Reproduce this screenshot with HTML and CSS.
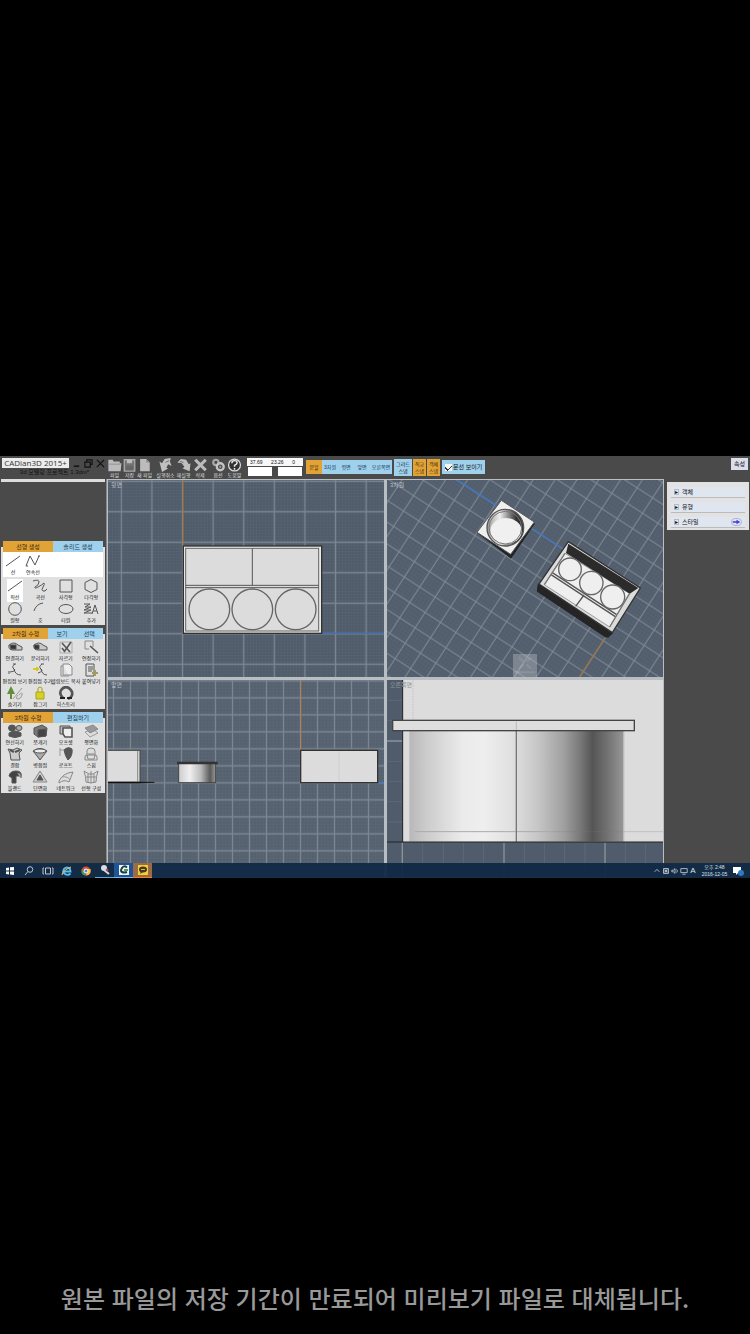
FILE: index.html
```html
<!DOCTYPE html>
<html lang="ko">
<head>
<meta charset="utf-8">
<meta name="viewport" content="width=device-width, initial-scale=1">
<title>CADian3D 2015+</title>
<link rel="stylesheet" href="styles.css">
</head>
<body>
<main class="app">
  <header class="topbar">
    <div class="brand">
      <div class="brand-row">
        <h1 class="brand-name">CADian3D 2015+</h1>
        <button class="win" aria-label="최소화"><svg viewBox="0 0 10 10"><path d="M2 8h6" stroke="#111" stroke-width="1.6"/></svg></button>
        <button class="win" aria-label="이전 크기"><svg viewBox="0 0 10 10"><path d="M3 3V1h6v5H7M1 3.500h6V9H1z" fill="none" stroke="#111" stroke-width="1.3"/></svg></button>
        <button class="win" aria-label="닫기"><svg viewBox="0 0 10 10"><path d="M1 1l8 8M9 1L1 9" stroke="#111" stroke-width="1.4"/></svg></button>
      </div>
      <p class="doc">3d 모델링 프로젝트 1.3dm*</p>
    </div>
    <nav class="tools">
      <button class="tool"><svg viewBox="0 0 16 16"><path d="M1 2h5l1 2h7v2h2l-1 9H1z" fill="#bcbcbc"/><path d="M2 7h13" stroke="#8c8c8c"/></svg><span>파일</span></button>
      <button class="tool"><svg viewBox="0 0 16 16"><path d="M2 2h12v13H2z" fill="#737373" stroke="#aaa" stroke-width="1.500"/><path d="M5 2h6v4H5z" fill="#bbb"/><path d="M4 9h8v5H4z" fill="#666"/></svg><span>저장</span></button>
      <button class="tool"><svg viewBox="0 0 16 16"><path d="M3 1h7l4 4v10H3z" fill="#bcbcbc"/><path d="M10 1v4h4" fill="#8c8c8c"/></svg><span>새 파일</span></button>
      <button class="tool wide"><svg viewBox="0 0 16 16"><path d="M1 4l3 2 3-5 7-1-1 4 2 5-4-2-2 4 2 1-7 4z" fill="#c0c0c0"/><path d="M8 5l4-2" stroke="#666"/></svg><span>실행취소</span></button>
      <button class="tool"><svg viewBox="0 0 16 16"><path d="M15 15l-8-3 2-2-3-4-5-1 4-4 6 1 3 5 2-1z" fill="#c0c0c0"/><path d="M4 4l4 1" stroke="#666"/></svg><span>재실행</span></button>
      <button class="tool gap"><svg viewBox="0 0 16 16"><path d="M2 2l12 12M14 2L2 14" stroke="#bcbcbc" stroke-width="3.600"/></svg><span>삭제</span></button>
      <button class="tool gap"><svg viewBox="0 0 16 16" fill="none"><circle cx="5" cy="5" r="3" stroke="#aaa" stroke-width="2.400"/><circle cx="10" cy="10" r="4" stroke="#c4c4c4" stroke-width="2.600"/><circle cx="10" cy="10" r="1.200" fill="#aaa"/></svg><span>옵션</span></button>
      <button class="tool"><svg viewBox="0 0 16 16" fill="none"><circle cx="8" cy="8" r="6.800" fill="#333" stroke="#ddd" stroke-width="1.400"/><path d="M5 6q0-3 3-3t3 2.500q0 1.500-3 3V10M8 11.500v2" stroke="#eee" stroke-width="1.700"/></svg><span>도움말</span></button>
    </nav>
    <div class="coords">
      <div class="readout"><span>37.69</span><span>23.26</span><span>0</span></div>
      <div class="entries"><input aria-label="X"><input aria-label="Y"></div>
    </div>
    <nav class="views">
      <button class="on">분할</button><button>3차원</button><button>윗면</button><button>앞면</button><button class="last">오른쪽면</button>
    </nav>
    <div class="snaps">
      <button>그리드<br>스냅</button><button class="on">직교<br>스냅</button><button class="on">객체<br>스냅</button>
    </div>
    <label class="check"><input type="checkbox" checked>문선 보이기</label>
    <button class="props">속성</button>
  </header>

  <div class="work">
    <aside class="left">
      <div class="strip"></div>
      <section class="panel">
        <div class="tabs"><button class="on">선형 생성</button><button>솔리드 생성</button></div>
        <div class="grid pale">
          <button><svg viewBox="0 0 16 14"><path d="M1 12L15 2"/></svg>선</button>
          <button><svg viewBox="0 0 16 14"><path d="M1 12L5 2l5 9 4-9M1 12h2M13 2h2"/></svg>연속선</button>
        </div>
        <div class="grid">
          <button class="sel"><svg viewBox="0 0 16 14"><path d="M1 12L15 2"/></svg>직선</button>
          <button><svg viewBox="0 0 16 14"><path d="M1 2q6-2 6 1T3 8q-1 2 3 0t6-4q1 1-1 4t0 4 4-2"/></svg>곡선</button>
          <button><svg viewBox="0 0 16 14"><path d="M2 1h12v12H2z"/></svg>사각형</button>
          <button><svg viewBox="0 0 16 14"><path d="M8 0.500l6 3v7l-6 3-6-3v-7z"/></svg>다각형</button>
          <button><svg viewBox="0 0 16 14"><circle cx="8" cy="7" r="6.300"/></svg>원형</button>
          <button><svg viewBox="0 0 16 14"><path d="M2 9Q4 2 11 1"/></svg>호</button>
          <button><svg viewBox="0 0 16 14"><ellipse cx="8" cy="7" rx="7" ry="4.500"/></svg>타원</button>
          <button><svg viewBox="0 0 16 14"><path d="M1 2h6L2 5h6L1 8h7L1 11h8M9 12l3-9 3 9M10 9h4"/></svg>추가</button>
        </div>
      </section>
      <section class="panel">
        <div class="tabs"><button class="on big">2차원 수정</button><button class="mid">보기</button><button class="mid">선택</button></div>
        <div class="grid">
          <button><svg viewBox="0 0 16 14"><path d="M2 5q5-4 9 0l4 2v3H6Q1 10 2 5z" fill="#c8c8c8"/><path d="M3 5h6v4H4z" fill="#333"/></svg>연결하기</button>
          <button><svg viewBox="0 0 16 14"><path d="M2 5q5-4 9 0l4 2v3H6Q1 10 2 5z" fill="#c8c8c8"/><path d="M2 5h5v4H3z" fill="#333"/></svg>분리하기</button>
          <button><svg viewBox="0 0 16 14"><path d="M2 13V2h12v11z" stroke="#aaa"/><path d="M4 3l8 9M13 2L6 12M4 8l3 4" stroke-width="1.600"/></svg>자르기</button>
          <button><svg viewBox="0 0 16 14"><path d="M2 9V1h8v6M2 9h4" stroke="#888"/><path d="M7 6l8 7" stroke-width="1.600"/></svg>연장하기</button>
          <button><svg viewBox="0 0 16 14"><path d="M8 1q-4 3-1 5t-4 3M7 6q1 6 7 6M6 1h3M2 8v3"/></svg>편집점 보기</button>
          <button><svg viewBox="0 0 16 14"><path d="M10 1q-4 3-1 5t-3 4M9 6q1 6 6 6M9 1h3"/><path d="M1 6h6M5 4v4" stroke="#d6ca1e" stroke-width="2"/></svg>편집점 추가</button>
          <button><svg viewBox="0 0 16 14"><path d="M5 1h6l3 3v8H5zM5 3H3v10h8" fill="#eee" stroke="#888"/></svg>클립보드 복사</button>
          <button><svg viewBox="0 0 16 14"><path d="M3 1h8v12H3zM5 4h5M5 6h5M5 8h4"/><path d="M12 7v6M9 10h6" stroke="#a39a60" stroke-width="2"/></svg>붙여넣기</button>
          <button><svg viewBox="0 0 16 14"><path d="M4 0L0 8h3v5h2V8h3z" fill="#628e39" stroke="none"/><path d="M6 13L15 2M11 9q-3 4 0 4t4-4-3 0" stroke="#999"/></svg>숨기기</button>
          <button><svg viewBox="0 0 16 14"><path d="M6 6V2q2-2 4 0v4" stroke="#aaa21b"/><path d="M4 6h8v7H4z" fill="#d6d320" stroke="#aaa21b"/></svg>잠그기</button>
          <button><svg viewBox="0 0 16 14"><path d="M5 12Q0 7 4 3t8 0 1 8l-3 2" stroke-width="2.600"/><path d="M2 12h5M9 12h5" stroke="#222" stroke-width="2"/></svg>히스토리</button>
        </div>
      </section>
      <section class="panel">
        <div class="tabs"><button class="on">3차원 수정</button><button>편집하기</button></div>
        <div class="grid">
          <button><svg viewBox="0 0 16 14"><g fill="#555"><ellipse cx="5" cy="4" rx="3.500" ry="3"/><ellipse cx="12" cy="4" rx="3" ry="2.500" fill="#aaa"/><path d="M2 9q6-4 12 0v3q-6 3-12 0z"/></g></svg>연산하기</button>
          <button><svg viewBox="0 0 16 14"><path d="M2 4l8-3 5 3-1 8-8 1-4-3z" fill="#777"/><path d="M6 6l8-1v7l-8 1z" fill="#444"/></svg>쪼개기</button>
          <button><svg viewBox="0 0 16 14"><path d="M2 2h10v8H2z" fill="#bbb"/><path d="M5 4h9v9H7l-2-3z" fill="#eee" stroke-width="1.600"/></svg>오프셋</button>
          <button><svg viewBox="0 0 16 14"><path d="M2 8l8-3 5 4-8 4z" fill="#ddd" stroke="#999"/><path d="M2 4l8-3 5 4-8 4z" fill="#999" stroke="#888"/></svg>평면화</button>
          <button><svg viewBox="0 0 16 14"><path d="M1 2l5 1 4-2 5 2-3 3 1 7H4L3 6z" fill="#ccc"/><path d="M3 3l4 2M8 5l5-2" stroke-width="2"/></svg>결합</button>
          <button><svg viewBox="0 0 16 14"><path d="M1 4q7-5 14 0l-4 5-3 4-3-4z" fill="#aaa"/><ellipse cx="8" cy="4" rx="6" ry="2" fill="#eee"/></svg>병합점</button>
          <button><svg viewBox="0 0 16 14"><path d="M6 3q4-4 8-1 1 7-4 11Q7 9 6 3z" fill="#555"/><path d="M2 3h4M2 1v8" stroke="#999"/></svg>로프트</button>
          <button><svg viewBox="0 0 16 14"><path d="M4 4q0-3 4-3t4 3v3H4zM3 8h10M2 10q0-2 2-2l1 4h6l1-4q2 0 2 2v3H2z" fill="#ddd" stroke="#888"/></svg>스윕</button>
          <button><svg viewBox="0 0 16 14"><path d="M2 6q1-5 7-5t5 5H9v7H5V8z" fill="#444"/><path d="M10 3q5-1 4 5" fill="#aaa"/></svg>블랜드</button>
          <button><svg viewBox="0 0 16 14"><path d="M8 1L1 12h14z" fill="#ccc" stroke="#888"/><path d="M8 5l-3 5h6z" fill="#555"/></svg>단면화</button>
          <button><svg viewBox="0 0 16 14"><path d="M1 11Q5 3 15 2L11 12Q6 9 1 13z" fill="#ddd" stroke="#888"/><path d="M4 7q6-1 8 3" stroke="#999"/></svg>네트워크</button>
          <button><svg viewBox="0 0 16 14"><path d="M1 1q2 6 2 11 5 2 10 0 0-5 2-11l-5 3H6zM5 4v8M8 1v12M11 4v8M3 7h10" stroke="#888"/></svg>선형 구성</button>
        </div>
      </section>
    </aside>

    <div class="viewports">
      <section class="view">
        <h2>윗면</h2>
        <svg viewBox="9 6 828 591">
          <defs>
            <pattern id="minorA" x="49" y="9" width="9.200" height="9.160" patternUnits="userSpaceOnUse"><path d="M0 0H9.200M0 0V9.200" stroke="#69737d" stroke-opacity=".5" stroke-width="2"/></pattern>
            <pattern id="majorA" x="3" y="-36" width="91.800" height="91.500" patternUnits="userSpaceOnUse"><path d="M0 45.750H92M46 0V92" stroke="#7c8691" stroke-width="4"/></pattern>
          </defs>
          <rect x="9" y="6" width="828" height="591" fill="#505c6b"/>
          <rect x="9" y="6" width="828" height="591" fill="url(#minorA)"/>
          <rect x="9" y="6" width="828" height="591" fill="url(#majorA)"/>
          <path d="M233 6v197" stroke="#a57a48" stroke-width="4"/>
          <path d="M650 466h187" stroke="#4470b5" stroke-width="4"/>
          <rect x="235" y="204" width="415" height="262" fill="#e8e8e6" stroke="#333" stroke-width="4"/>
          <rect x="242" y="211" width="399" height="248" fill="#dcdcdc" stroke="#666" stroke-width="3"/>
          <path d="M442 211v111M242 322h399M242 329h399" stroke="#555" stroke-width="3"/>
          <g fill="none" stroke="#666" stroke-width="4"><circle cx="313" cy="394" r="61"/><circle cx="442" cy="394" r="61"/><circle cx="572" cy="394" r="61"/></g>
        </svg>
      </section>
      <section class="view">
        <h2>3차원</h2>
        <svg viewBox="6 6 828 591">
          <defs>
            <pattern id="minorB" width="11" height="11" patternUnits="userSpaceOnUse" patternTransform="translate(745 350) rotate(33)"><path d="M0 0H11M0 0V11" stroke="#626d7b" stroke-opacity=".6" stroke-width="2"/></pattern>
            <pattern id="majorB" width="55" height="55" patternUnits="userSpaceOnUse" patternTransform="translate(745 350) rotate(33) translate(-27 -27)"><path d="M0 27H55M27 0V55" stroke="#818b96" stroke-width="3"/></pattern>
            <linearGradient id="bowl"><stop offset="0" stop-color="#999"/><stop offset=".35" stop-color="#eee"/><stop offset=".8" stop-color="#333"/></linearGradient>
          </defs>
          <rect x="6" y="6" width="828" height="591" fill="#525e6d"/>
          <rect x="6" y="6" width="828" height="591" fill="url(#minorB)"/>
          <rect x="6" y="6" width="828" height="591" fill="url(#majorB)"/>
          <path d="M215 5L530 210" stroke="#3b75c2" stroke-width="4"/>
          <path d="M660 480L583 597" stroke="#9c7441" stroke-width="4"/>
          <path d="M276 163l102 77 70-103-10-4-60 92z" fill="#222" stroke="#222" stroke-width="3"/>
          <path d="M349 67l99 65-71 97-101-66z" fill="#efefef" stroke="#555" stroke-width="3"/>
          <circle cx="361" cy="149" r="55" fill="url(#bowl)" stroke="#555" stroke-width="4"/>
          <ellipse cx="363" cy="159" rx="47" ry="39" fill="#f0f0f0"/>
          <circle cx="361" cy="149" r="49" fill="none" stroke="#777" stroke-width="3"/>
          <path d="M460 318l218 146 6 0-14 13-8 0L457 340z" fill="#252525" stroke="#222" stroke-width="3"/>
          <path d="M550 191l216 139-84 134-220-146z" fill="#dcdcdc" stroke="#333" stroke-width="4"/>
          <path d="M540 226l194 120-60 101-196-127z" fill="#efefef" stroke="#777" stroke-width="2"/>
          <path d="M550 197l210 133-26 17-191-122z" fill="#2b2b2b"/>
          <path d="M502 284l193 126M498 290l193 126M597 351l-25 34" fill="none" stroke="#555" stroke-width="4"/>
          <g fill="#efefef" stroke="#666" stroke-width="4"><circle cx="555" cy="274" r="34"/><circle cx="619" cy="315" r="35"/><circle cx="683" cy="357" r="36"/></g>
          <path d="M540 226l-62 94M734 346l-60 101" stroke="#777" stroke-width="4"/>
          <g opacity=".35"><rect x="384" y="528" width="72" height="69" fill="#c8ccd0"/><path d="M402 538l13 13M438 538l-13 13M402 572l13-13M438 572l-13-13M388 583h62" stroke="#eee" stroke-width="6"/></g>
        </svg>
      </section>
      <section class="view">
        <h2>앞면</h2>
        <svg viewBox="9 12 828 591">
          <defs>
            <pattern id="minorC" x="25" y="15" width="10.200" height="10.200" patternUnits="userSpaceOnUse"><path d="M0 0H11M0 0V11" stroke="#66717d" stroke-opacity=".6" stroke-width="2"/></pattern>
            <pattern id="majorC" x="0" y="-11" width="51" height="51" patternUnits="userSpaceOnUse"><path d="M0 25.500H51M25.500 0V51" stroke="#7c8691" stroke-width="4"/></pattern>
            <linearGradient id="cylA"><stop offset="0" stop-color="#ccc"/><stop offset=".3" stop-color="#efefef"/><stop offset=".6" stop-color="#bbb"/><stop offset=".85" stop-color="#5a5a5a"/><stop offset="1" stop-color="#999"/></linearGradient>
          </defs>
          <rect x="9" y="12" width="828" height="591" fill="#566170"/>
          <rect x="9" y="12" width="828" height="591" fill="url(#minorC)"/>
          <rect x="9" y="12" width="828" height="591" fill="url(#majorC)"/>
          <path d="M587 12v210" stroke="#b5834a" stroke-width="3"/>
          <path d="M820 320h17" stroke="#3b75c2" stroke-width="4"/>
          <rect x="0" y="223" width="105" height="96" fill="#dcdcdc" stroke="#444" stroke-width="3"/>
          <path d="M98 225v92" stroke="#888" stroke-width="3"/>
          <path d="M9 318h90l49 1-49 2H9z" fill="#111" stroke="#111" stroke-width="2"/>
          <rect x="221" y="262" width="111" height="58" fill="url(#cylA)" stroke="#444" stroke-width="3"/>
          <path d="M216 261h122" stroke="#333" stroke-width="7"/>
          <rect x="587" y="223" width="231" height="97" fill="#dcdcdc" stroke="#333" stroke-width="4"/>
          <path d="M702 226v92" stroke="#d0d0d0" stroke-width="3"/>
        </svg>
      </section>
      <section class="view">
        <h2>오른쪽면</h2>
        <svg viewBox="6 12 828 591">
          <defs>
            <linearGradient id="cylB"><stop offset="0" stop-color="#b8b8b8"/><stop offset=".08" stop-color="#ccc"/><stop offset=".25" stop-color="#ebebeb"/><stop offset=".35" stop-color="#eee"/><stop offset=".48" stop-color="#e0e0e0"/><stop offset=".6" stop-color="#c6c6c6"/><stop offset=".72" stop-color="#a0a0a0"/><stop offset=".8" stop-color="#777"/><stop offset=".855" stop-color="#555"/><stop offset=".92" stop-color="#707070"/><stop offset="1" stop-color="#979797"/></linearGradient>
          </defs>
          <rect x="6" y="12" width="828" height="591" fill="#505c6b"/>
          <path d="M6 73h47M6 134h47M6 256h47M6 316h47M6 377h47M6 438h47M113 500v103M175 500v103M235 500v103M296 500v103M418 500v103M478 500v103M539 500v103M600 500v103M721 500v103M782 500v103" stroke="#65707c" stroke-width="2"/>
          <path d="M6 195h47M52 500v103M357 500v103M660 500v103" stroke="#8a939c" stroke-width="4"/>
          <rect x="53" y="12" width="781" height="486" fill="#dcdcdc"/>
          <rect x="73" y="164" width="643" height="333" fill="url(#cylB)"/>
          <path d="M84 12v120M84 166v331" stroke="#bcbcbc" stroke-width="2" stroke-dasharray="5 3"/>
          <path d="M90 467h408" stroke="#aaa" stroke-width="3"/>
          <path d="M498 467h336" stroke="#777" stroke-opacity=".4" stroke-width="2"/>
          <path d="M716 164v333" stroke="#bbb" stroke-width="4"/>
          <path d="M394 164v333" stroke="#777" stroke-width="4"/>
          <path d="M53 12v486M6 498h828" stroke="#222" stroke-width="3" fill="none"/>
          <rect x="23" y="133" width="725" height="31" fill="#dedede" stroke="#444" stroke-width="4"/>
          <path d="M394 136v26" stroke="#aaa" stroke-width="2"/>
        </svg>
      </section>
    </div>

    <aside class="right">
      <div class="props-list">
        <button><i>▸</i>객체</button>
        <button><i>▸</i>유형</button>
        <button><i>▸</i>스타일<span class="go"><svg viewBox="0 0 12 8"><path d="M1 4h7" stroke="#3f3fd0" stroke-width="2"/><path d="M6 1l5 3-5 3z" fill="#3f3fd0"/></svg></span></button>
      </div>
    </aside>
  </div>

  <footer class="taskbar">
    <button aria-label="시작"><svg viewBox="0 0 12 12"><path d="M2 3l3-.5v3H2zM6 2.300L10 2v3.500H6zM2 6.500h3v3L2 9zM6 6.500h4V10l-4-.4z" fill="#fff"/></svg></button>
    <button aria-label="검색"><svg viewBox="0 0 12 12" fill="none" stroke="#bcc6d0"><circle cx="7" cy="4.500" r="2.800"/><path d="M5 6.500L2 10"/></svg></button>
    <button aria-label="작업 보기"><svg viewBox="0 0 12 12" fill="none" stroke="#bcc6d0"><path d="M3.500 3h5v6h-5zM2 3H1v6h1M10 3h1v6h-1"/></svg></button>
    <button aria-label="Internet Explorer"><svg viewBox="0 0 12 12" fill="none"><path d="M9.500 8.500Q7 11 4 9T3 4q3-3 6 0l.5 2.500H3" stroke="#56bdf0" stroke-width="1.800"/><path d="M1 10Q1 6 10 2" stroke="#e8cd55"/></svg></button>
    <button aria-label="Chrome"><svg viewBox="0 0 12 12"><circle cx="6" cy="6" r="4.500" fill="#dd4b3b"/><path d="M2 4l4 6.500Q1 10 1.500 6z" fill="#37a352"/><path d="M6 10.500L8 4h2.500q1 6-4.500 6.500z" fill="#f4c33a"/><circle cx="6" cy="6" r="2" fill="#4788e8" stroke="#fff"/></svg></button>
    <button class="run" aria-label="캡처 도구"><svg viewBox="0 0 12 12"><circle cx="5" cy="4" r="3" fill="#d5dce3"/><path d="M5 6l5 4" stroke="#d5dce3" stroke-width="2"/><circle cx="8" cy="6" r="1.300" fill="#c44"/></svg></button>
    <button class="cad" aria-label="CADian3D"><svg viewBox="0 0 12 12"><path d="M1 1h10v10H1z" fill="#f0f4f3"/><path d="M9 3.500Q6 1 4 4t0 4 5 0" fill="none" stroke="#203c42" stroke-width="2"/><path d="M6 6h4" stroke="#479c65" stroke-width="2"/></svg></button>
    <button class="talk" aria-label="카카오톡"><svg viewBox="0 0 12 12"><path d="M1 1h10v10H1z" fill="#f0d037"/><ellipse cx="6" cy="5.500" rx="4" ry="3" fill="#483522"/><path d="M4 7l-1 3 3-2z" fill="#483522"/><path d="M4 5.500h4" stroke="#d8bd38"/></svg></button>
    <div class="tray">
      <svg viewBox="0 0 10 10" fill="none" stroke="#ccd5dd"><path d="M2 6l3-3 3 3"/></svg>
      <svg viewBox="0 0 10 10"><path d="M2 2h6v6H2z" fill="#405468" stroke="#dde3e9"/><path d="M4 4h2v2H4z" fill="#fff"/></svg>
      <svg viewBox="0 0 10 10" fill="none" stroke="#ccd5dd"><path d="M1 4h2l2-2v6L3 6H1zM7 3q2 2 0 4"/></svg>
      <svg viewBox="0 0 10 10" fill="none" stroke="#ccd5dd"><path d="M1 2h8v5H1zM3 9h4"/></svg>
      <span>A</span>
      <time datetime="2016-12-05T14:48">오후 2:48<br>2016-12-05</time>
      <svg viewBox="0 0 12 12"><path d="M1 2h8v6H6L4 10V8H1z" fill="#fff"/><circle cx="9" cy="8" r="3" fill="#2f79c4"/></svg>
    </div>
  </footer>
</main>
<p class="notice">원본 파일의 저장 기간이 만료되어 미리보기 파일로 대체됩니다.</p>
</body>
</html>
```
FILE: styles.css
```css
* { box-sizing: border-box; }
body {
  margin: 0;
  min-height: 100vh;
  display: grid;
  grid-template-columns: minmax(0, 1fr);
  grid-template-rows: 1fr auto 1fr;
  background: #000;
  font-family: "Liberation Sans", "Noto Sans CJK KR", sans-serif;
  font-size: 5px;
  line-height: 6px;
  color: #111;
}
h1, h2, p { margin: 0; font-weight: 400; }
button, input {
  margin: 0;
  padding: 0;
  border: 0;
  border-radius: 0;
  background: none;
  color: inherit;
  font: inherit;
}
button { white-space: nowrap; }
svg { display: block; }

.app {
  grid-row: 2;
  position: relative;
  background: #4a4a4a;
}

/* top bar */
.topbar {
  display: flex;
  align-items: flex-start;
  height: 23px;
  padding: 2px 2px 0;
}
.brand { width: 105px; flex: none; }
.brand-row { display: flex; gap: 3px; height: 10px; }
.brand-name {
  width: 67px;
  background: #ececec;
  color: #333;
  font: 8px/10px "Open Sans", sans-serif;
  text-align: center;
  white-space: nowrap;
}
.win svg { width: 9px; height: 9px; }
.doc {
  color: #111;
  font-size: 6px;
  line-height: 9px;
  text-align: center;
}
.tools { display: flex; width: 138px; flex: none; }
.tool {
  width: 15px;
  display: flex;
  flex-direction: column;
  align-items: center;
  color: #ddd;
}
.tool svg { width: 15px; height: 14px; }
.wide { width: 21px; margin-left: 3px; }
.gap { width: 18px; }
.coords { width: 56px; margin: 0 3px 0 2px; flex: none; }
.readout {
  display: flex;
  justify-content: space-between;
  height: 8px;
  padding: 1px 8px 1px 3px;
  background: #f8f8f8;
}
.entries { display: flex; justify-content: space-between; padding: 1px; }
.entries input { width: 24px; height: 9px; background: #fff; }
.views, .snaps { display: flex; margin-top: 2px; }
.views button {
  height: 14px;
  width: 16px;
  background: #9fd0ec;
  color: #173a55;
}
.views .last { width: 22px; }
.views .on, .snaps .on, .tabs .on { background: #e2a336; color: #3a2808; }
.snaps { gap: 1px; margin: 1px 2px 0 2px; }
.snaps button {
  width: 13px;
  height: 17px;
  background: #9fd0ec;
  line-height: 7px;
}
.snaps button:first-child { width: 18px; }
.check {
  display: flex;
  align-items: center;
  gap: 1px;
  height: 14px;
  margin-top: 2px;
  padding: 0 3px;
  background: #9fd0ec;
  font-size: 6px;
  white-space: nowrap;
}
.check input { appearance: none; width: 7px; height: 7px; background: #f4f4f4; }
.check input:checked {
  background:
    linear-gradient(45deg, transparent 2px, #333 2px 3px, transparent 3px) 0 0 / 3px 7px no-repeat,
    linear-gradient(-45deg, transparent 3px, #333 3px 4px, transparent 4px) 2px 0 / 5px 7px no-repeat,
    #f4f4f4;
}
.props {
  width: 17px;
  height: 12px;
  margin-left: auto;
  background: #dcdfea;
  font-size: 6px;
}

/* work area */
.work {
  display: grid;
  grid-template-columns: 107px minmax(0, 1fr) 86px;
}
.left {
  padding: 0 1px;
  border-right: 1px solid #888;
}
.strip { height: 3px; margin-bottom: 59px; background: #ddd; }
.panel {
  margin-bottom: 3px;
  background: #e0e0e0;
}
.tabs {
  display: flex;
  height: 11px;
  padding: 0 2px;
  background: linear-gradient(#4a4a4a 6px, #e0e0e0 6px);
}
.tabs button { flex: 1; background: #9fd0ec; color: #173a55; font-size: 6px; }
.tabs .big { flex: 5; }
.tabs .mid { flex: 3; }
.grid {
  display: grid;
  grid-template-columns: repeat(4, minmax(0, 1fr));
  padding: 1px 1px 0;
}
.grid button {
  height: 23px;
  display: flex;
  flex-direction: column;
  align-items: center;
}
.grid svg {
  width: 16px;
  height: 14px;
  margin-bottom: 1px;
  flex: none;
  fill: none;
  stroke: #555;
  stroke-width: 1;
}
.pale {
  grid-template-columns: repeat(5, minmax(0, 1fr));
  margin: 0 2px 1px;
  padding: 2px 0 0;
  background: #fff;
}
.grid .sel { background: linear-gradient(90deg, #e0e0e0 5px, #fff 5px 21px, #e0e0e0 21px); }

.viewports {
  display: grid;
  grid-template-columns: repeat(2, minmax(0, 1fr));
  gap: 3px;
  padding: 1px;
  background: #b9bec3;
}
.view { position: relative; }
.view > svg { width: 100%; height: auto; }
.view h2 {
  position: absolute;
  top: 2px;
  left: 3px;
  font-size: 6px;
  line-height: 6px;
  color: #b8bdc2;
}
.view:last-child h2 { color: #8f9499; }

.right { padding: 3px 1px 0 3px; }
.props-list {
  display: grid;
  gap: 4px;
  padding: 5px 4px 2px;
  background: #e2e2e2;
}
.props-list button {
  display: flex;
  align-items: center;
  gap: 3px;
  height: 11px;
  padding: 0 3px;
  background: #dfe6f0;
  border-bottom: 1px solid #bbb;
  font-size: 6px;
}
.props-list i { border: 1px solid #b4bac4; font-style: normal; line-height: 4px; }
.go { margin-left: auto; border: 1px solid #b0b4dc; border-radius: 4px; }
.go svg { width: 9px; height: 6px; }

/* task bar */
.taskbar {
  position: absolute;
  inset: auto 0 0 0;
  display: flex;
  height: 15px;
  background: rgba(18, 42, 70, .96);
  color: #dde4ea;
}
.taskbar button {
  width: 19px;
  display: flex;
  align-items: center;
  justify-content: center;
}
.taskbar button svg { width: 12px; height: 12px; }
.taskbar .run { border-bottom: 1px solid #6aa6d6; }
.taskbar .cad { background: #1f5596; border-bottom: 1px solid #79b8ee; }
.taskbar .talk { background: #9a6b45; border-bottom: 1px solid #f08030; }
.tray {
  display: flex;
  align-items: center;
  gap: 1px;
  margin-left: auto;
  padding-right: 6px;
}
.tray svg { width: 8px; height: 8px; }
.tray span { width: 8px; font-size: 8px; text-align: center; }
.tray time { width: 33px; text-align: center; line-height: 7px; white-space: nowrap; }
.tray svg:last-child { width: 12px; height: 12px; }

.notice {
  grid-row: 3;
  align-self: end;
  padding: 0 16px 20px;
  color: #999;
  font-family: "Noto Sans CJK KR", sans-serif;
  font-size: 24px;
  font-weight: 500;
  line-height: 32px;
  text-align: center;
}
```
